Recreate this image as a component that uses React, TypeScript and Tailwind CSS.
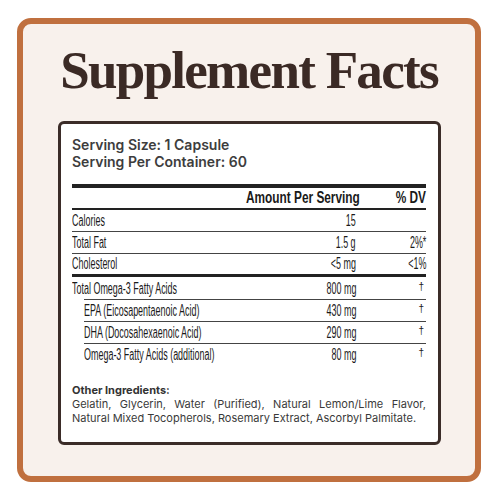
const rows = [
  { name: "Calories", amount: "15", dv: "" },
  { name: "Total Fat", amount: "1.5 g", dv: "2%*" },
];

const omega = [
  { name: "EPA (Eicosapentaenoic Acid)", amount: "430 mg" },
  { name: "DHA (Docosahexaenoic Acid)", amount: "290 mg" },
  { name: "Omega-3 Fatty Acids (additional)", amount: "80 mg" },
];

const sans = { fontFamily: '"Liberation Sans", Arial, sans-serif' };

// the label uses a very narrow face, so squeeze a normal one
const Left = ({ children }: { children: React.ReactNode }) => (
  <span className="inline-block whitespace-nowrap origin-left scale-x-[0.56]">{children}</span>
);
const Right = ({ children, wide = false }: { children: React.ReactNode; wide?: boolean }) => (
  <span className={`inline-block whitespace-nowrap origin-right ${wide ? "scale-x-[0.74]" : "scale-x-[0.56]"}`}>
    {children}
  </span>
);

const App = () => {
  return (
    <div className="w-[500px] h-[500px] bg-white pt-[18px] pl-[17px]">
      <div className="w-[464px] h-[464px] rounded-[14px] border-[6px] border-[#c0703f] bg-[#f8f1ec] flex flex-col items-center">
        <h1
          className="mt-[20px] text-[53px] leading-[52px] font-bold tracking-[-1.7px] text-[#3b2a25]"
          style={{ fontFamily: '"Liberation Serif", serif' }}
        >
          Supplement Facts
        </h1>
        <div className="mt-[25px] ml-[1px] w-[383px] rounded-[6px] border-[3px] border-[#3b2c28] bg-white pl-[11px] pr-[12px] pt-[12px] pb-[17px]">
          <div className="text-[14px] leading-[17px] font-semibold text-[#3d3d3d]" style={{ fontFamily: "Inter, sans-serif" }}>
            <div>Serving Size: 1 Capsule</div>
            <div>Serving Per Container: 60</div>
          </div>

          <div className="mt-[14px] border-t-4 border-[#222] text-[16px] text-[#1a1a1a]" style={sans}>
            <div className="flex items-center h-[22px] border-b-2 border-[#222] font-bold">
              <div className="flex-1" />
              <div className="w-[150px] text-right"><Right wide>Amount Per Serving</Right></div>
              <div className="w-[70px] text-right"><Right wide>% DV</Right></div>
            </div>
            {rows.map((r) => (
              <div key={r.name} className="flex items-center h-[22px] border-b border-[#444]">
                <div className="flex-1 min-w-0"><Left>{r.name}</Left></div>
                <div className="w-[150px] text-right"><Right>{r.amount}</Right></div>
                <div className="w-[70px] text-right"><Right>{r.dv}</Right></div>
              </div>
            ))}
            <div className="flex items-center h-[23px] border-b-[3px] border-[#222]">
              <div className="flex-1 min-w-0"><Left>Cholesterol</Left></div>
              <div className="w-[150px] text-right"><Right>&lt;5 mg</Right></div>
              <div className="w-[70px] text-right"><Right>&lt;1%</Right></div>
            </div>
            <div className="flex items-center h-[22px] pt-[1px]">
              <div className="flex-1 min-w-0"><Left>Total Omega-3 Fatty Acids</Left></div>
              <div className="w-[150px] text-right"><Right>800 mg</Right></div>
              <div className="w-[70px] text-right text-[10px] pr-[2px] -mt-[4px]">†</div>
            </div>
            {omega.map((r) => (
              <div key={r.name} className="ml-[12px] flex items-center h-[22px] border-t border-[#444]">
                <div className="flex-1 min-w-0"><Left>{r.name}</Left></div>
                <div className="w-[150px] text-right"><Right>{r.amount}</Right></div>
                <div className="w-[70px] text-right text-[10px] pr-[2px] -mt-[4px]">†</div>
              </div>
            ))}
          </div>

          <div className="mt-[18px] text-[11px] leading-[14px] text-[#3a3a3a]" style={{ fontFamily: "Inter, sans-serif" }}>
            <div className="font-bold text-[#333]">Other Ingredients:</div>
            <p className="text-justify [text-align-last:left]">
              Gelatin, Glycerin, Water (Purified), Natural Lemon/Lime Flavor, Natural Mixed Tocopherols, Rosemary Extract, Ascorbyl Palmitate.
            </p>
          </div>
        </div>
      </div>
    </div>
  );
};

export default App;
